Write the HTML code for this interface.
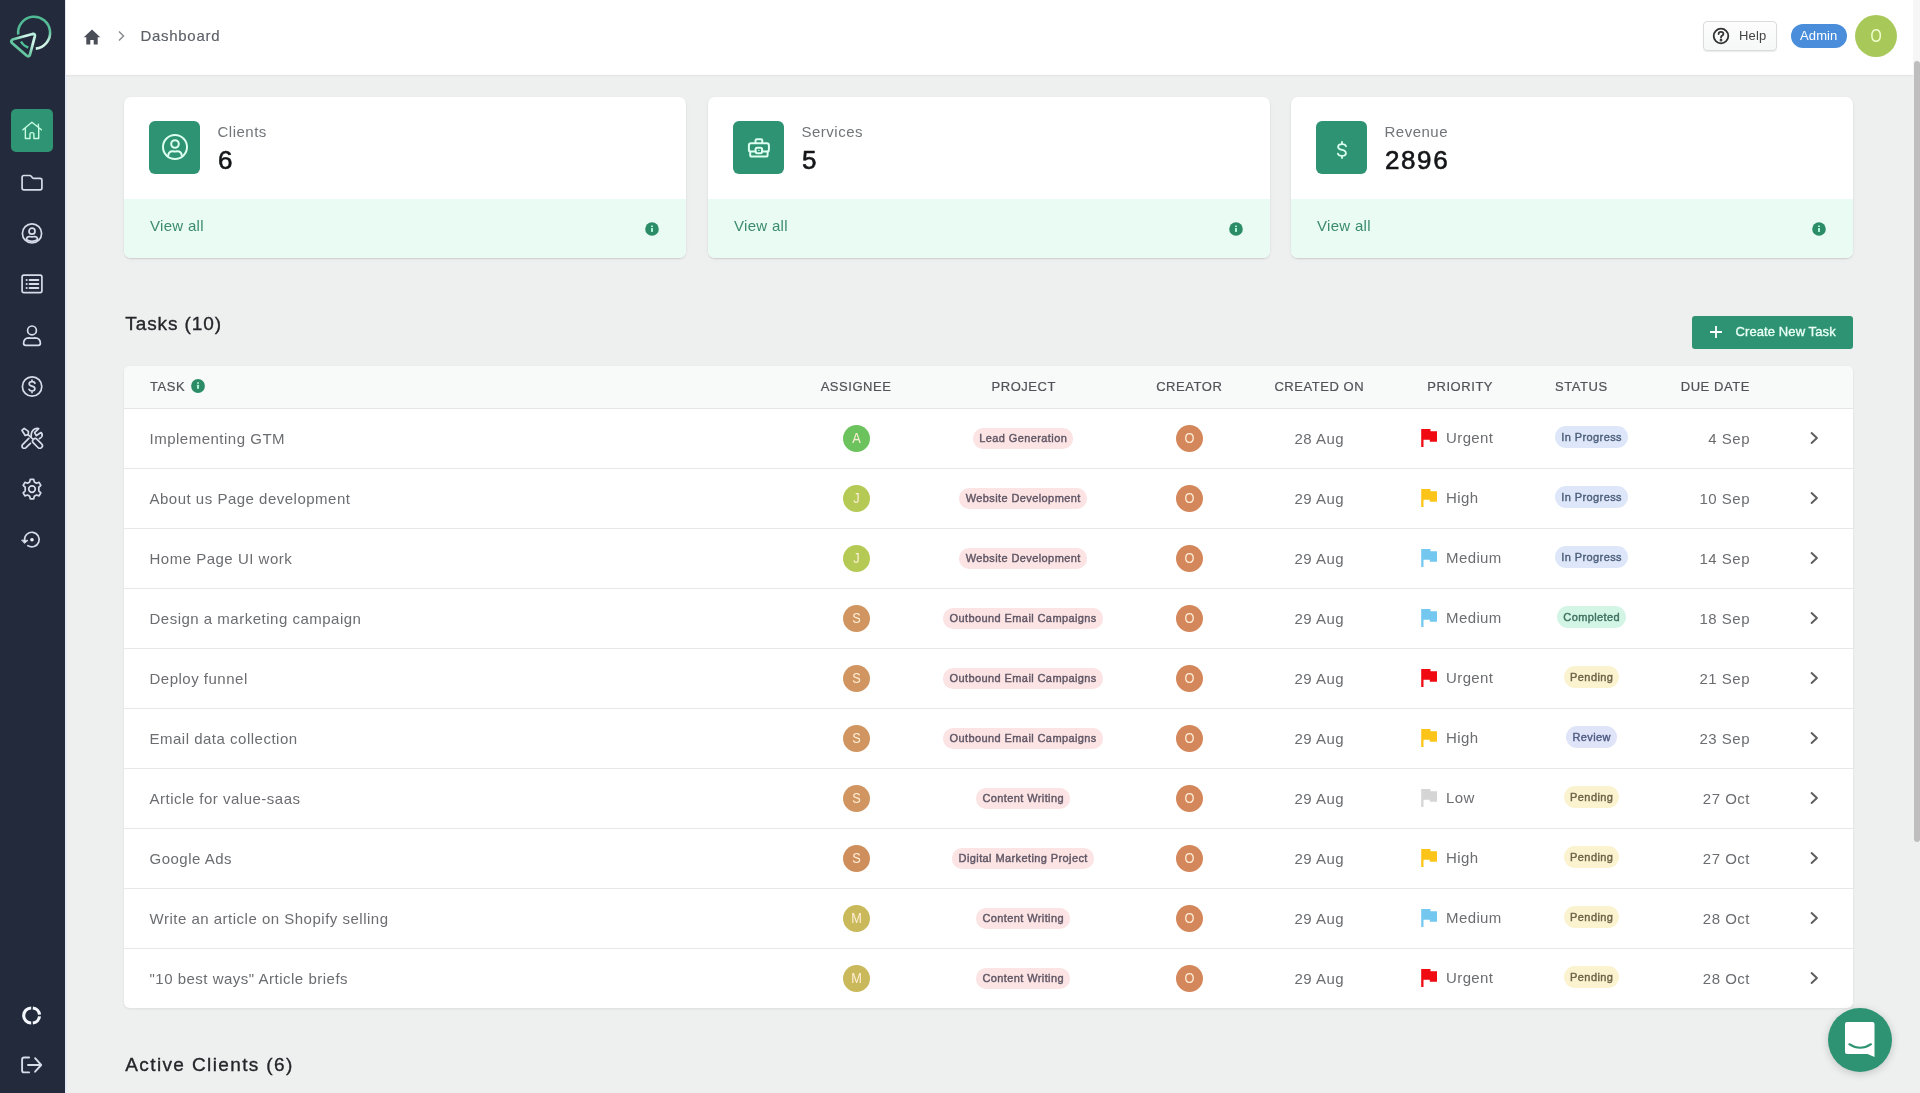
<!DOCTYPE html>
<html><head><meta charset="utf-8"><title>Dashboard</title>
<style>
*{margin:0;padding:0;box-sizing:border-box}
html,body{width:1920px;height:1093px;overflow:hidden}
body{font-family:"Liberation Sans",sans-serif;background:#eeefef;position:relative;color:#333}
.side{position:absolute;left:0;top:0;width:65px;height:1093px;background:#232a3c}
.sideline{position:absolute;left:65px;top:0;width:2px;height:1093px;background:#e6e9f4}
.logo{position:absolute;left:0;top:0}
.act{position:absolute;left:11px;top:109px;width:42px;height:43px;border-radius:5px;background:#2f9473}
.act svg{position:absolute;left:9px;top:9px}
.sic{position:absolute;left:20px;width:24px;height:24px}
.sic svg{display:block}
.header{position:absolute;left:66px;top:0;width:1847px;height:75px;background:#fff;box-shadow:0 1px 2px rgba(0,0,0,0.05);border-bottom:1px solid #fbfbfb}
.crumbhome{position:absolute;left:84px;top:29px}
.crumbchev{position:absolute;left:116px;top:29px}
.crumb{position:absolute;left:140.5px;top:28px;font-size:15px;line-height:15px;color:#5c6168;letter-spacing:0.7px;-webkit-text-stroke:0.15px #5c6168}
.help{position:absolute;left:1703px;top:21px;width:74px;height:30px;border:1px solid #dadbdc;border-radius:4px;background:linear-gradient(#fdfdfd,#f6f7f7);box-shadow:0 1px 1px rgba(0,0,0,0.08)}
.help svg{position:absolute;left:8px;top:5.3px}
.help span{position:absolute;left:35px;top:6.5px;font-size:13px;line-height:13px;color:#444;letter-spacing:0.2px}
.admin{position:absolute;left:1790.5px;top:23.5px;width:56.5px;height:24.5px;border-radius:13px;background:#4a8edb;color:#fff;font-size:13px;line-height:24.5px;text-align:center;letter-spacing:0.1px}
.uav{position:absolute;left:1855px;top:15px;width:42px;height:42px;border-radius:50%;background:#a8c95a}
.uav span{position:absolute;left:0;top:0;width:42px;height:42px;line-height:42px;text-align:center;color:#f0ffd2;font-size:18px;transform:scaleX(0.8)}
.sbtrack{position:absolute;left:1913px;top:0;width:7px;height:75px;background:#f6f6f6}
.sbthumb{position:absolute;left:1913.5px;top:61px;width:6.5px;height:781px;border-radius:3px;background:#bebebf}
.card{position:absolute;top:97px;width:562px;height:160.5px;background:#fff;border-radius:7px;box-shadow:0 1px 1.5px rgba(0,0,0,0.13),0 1px 4px rgba(0,0,0,0.04);overflow:hidden}
.cbox{position:absolute;left:25.3px;top:24px;width:51px;height:52.5px;border-radius:6px;background:#2e9373}
.cbox svg{position:absolute;left:11.5px;top:12px}
.cbox svg.dsvg{position:absolute;left:19.6px;top:19.5px}
.clab{position:absolute;left:93.5px;top:26.8px;font-size:15px;line-height:15px;color:#717478;letter-spacing:0.5px}
.cnum{position:absolute;left:94px;top:49.7px;font-size:26px;line-height:26px;color:#141518;letter-spacing:1.6px;-webkit-text-stroke:0.6px #141518}
.cfoot{position:absolute;left:0;top:101.5px;width:100%;height:59px;background:#e9fbf3}
.vall{position:absolute;left:26px;top:19.5px;font-size:15px;line-height:15px;color:#3b8b6f;letter-spacing:0.3px}
.info{position:absolute;left:521px;top:124.5px;}
.cfoot .info{position:absolute;left:521.1px;top:23.7px}
.title{position:absolute;left:125.3px;font-size:19px;line-height:19px;color:#25262a;letter-spacing:0.9px;-webkit-text-stroke:0.35px #25262a}
.newbtn{position:absolute;left:1692px;top:316px;width:161px;height:33px;border-radius:3px;background:#2e9373;color:#fff}
.newbtn svg{position:absolute;left:17px;top:9px}
.newbtn span{position:absolute;left:43.5px;top:9px;font-size:13px;line-height:13px;letter-spacing:0.1px;color:#eafff6;-webkit-text-stroke:0.35px #eafff6}
.table{position:absolute;left:124px;top:366px;width:1729px;height:642px;background:#fff;border-radius:6px;box-shadow:0 1px 3px rgba(0,0,0,0.08);overflow:hidden}
.thead{position:absolute;left:0;top:0;width:100%;height:43px;background:#f8f9f9;border-bottom:1px solid #e4e6e8}
.th{position:absolute;top:13.5px;font-size:13px;line-height:13px;color:#4f5257;letter-spacing:0.55px;white-space:nowrap;-webkit-text-stroke:0.2px #4f5257}
.th.c{width:120px;text-align:center;text-indent:0.55px}
.th.r{width:120px;text-align:right;margin-right:-0.55px}
.thinfo{position:absolute;left:67px;top:12.6px}
.row{position:absolute;left:0;width:100%;height:60px;border-bottom:1px solid #e6e8ea}
.tname{position:absolute;left:25.5px;top:22px;font-size:15px;line-height:15px;color:#6b6d70;letter-spacing:0.5px;white-space:nowrap}
.av{position:absolute;left:718.5px;top:15.5px;width:27px;height:27px;border-radius:50%}
.av span{position:absolute;left:0;top:0;width:27px;height:27px;color:#ffeed6;font-size:14.5px;line-height:26.5px;text-align:center;transform:scaleX(0.88)}
.av.cr{left:1051.5px;background:#d3875a}
.proj{position:absolute;left:799px;width:200px;top:19px;text-align:center}
.proj span{display:inline-block;height:20.5px;line-height:20.5px;padding:0 6px 0 6.4px;border-radius:10px;background:#fce3e4;color:#5e5664;font-size:11px;letter-spacing:0.4px;-webkit-text-stroke:0.4px #5e5664}
.created{position:absolute;left:1145px;width:100px;top:22px;text-align:center;font-size:15px;line-height:15px;color:#6b6d70;letter-spacing:0.5px;text-indent:0.5px}
.pri{position:absolute;left:1296px;top:18px;height:22px}
.pri .flag{position:absolute;left:0;top:1px}
.pri span{position:absolute;left:26px;top:3px;font-size:15px;line-height:15px;color:#6b6d70;letter-spacing:0.4px}
.stat{position:absolute;left:1417.5px;width:100px;top:17px;text-align:center}
.stat span{display:inline-block;height:22px;line-height:22px;padding:0 6px 0 6.4px;border-radius:11px;font-size:11px;letter-spacing:0.4px;-webkit-text-stroke:0.4px currentColor}
.due{position:absolute;left:1526px;width:100px;top:22px;text-align:right;font-size:15px;line-height:15px;color:#6b6d70;letter-spacing:0.5px;margin-right:-0.5px}
.chev{position:absolute;left:1685px;top:22px}
.chat{position:absolute;left:1828px;top:1008px;width:64px;height:64px;border-radius:50%;background:#2e9373;box-shadow:0 2px 8px rgba(0,0,0,0.18)}
.chat svg{position:absolute;left:17px;top:14px}
#wrap{position:absolute;left:0;top:0;width:1920px;height:1093px;will-change:transform;overflow:hidden}
</style></head><body><div id="wrap">
<div class="side">
<svg class="logo" width="65" height="65" viewBox="0 0 65 65">
<defs><linearGradient id="lg" x1="0" y1="1" x2="1" y2="0"><stop offset="0" stop-color="#4cb891"/><stop offset="0.45" stop-color="#6dcaa6"/><stop offset="0.75" stop-color="#d2f6ea"/><stop offset="1" stop-color="#b5eeda"/></linearGradient><linearGradient id="lg2" x1="0" y1="0" x2="0.3" y2="1"><stop offset="0" stop-color="#4cb891"/><stop offset="0.7" stop-color="#5cc09b"/><stop offset="1" stop-color="#d0f4e6"/></linearGradient></defs>
<path d="M18.2 34.5 A16 16 0 1 1 35.8 48.6" fill="none" stroke="url(#lg2)" stroke-width="2.6" stroke-linecap="butt"/>
<path d="M12.5 39.5 L32.5 34 Q35.5 33.5 34.8 36.5 L30 54.5 Q29 57.5 26.5 55.5 L12 43 Q10.5 41 12.5 39.5 Z" fill="none" stroke="url(#lg)" stroke-width="2.8" stroke-linejoin="round"/>
<path d="M21 41.5 Q23.5 46 28.3 47.5" fill="none" stroke="#4fc196" stroke-width="2.4"/>
</svg>
<div class="act"><svg width="24" height="24" viewBox="0 0 24 24" fill="none" stroke="#c6fde3" stroke-width="1.4" stroke-linecap="round" stroke-linejoin="round"><path d="M2.9 11.7 L11.9 4.3 L21.4 11.7 M5.35 9.6 V20.5 H10 V15.8 Q10 14.6 11.95 14.6 Q13.9 14.6 13.9 15.8 V20.5 H18.7 V9.6 M18.4 6.3 V9"/></svg></div>
<div class="sic" style="top:170px"><svg width="24" height="24" viewBox="0 0 24 24" fill="none" stroke="#d6dce8" stroke-width="1.7" stroke-linecap="round" stroke-linejoin="round" stroke-width="1.9"><path d="M2.1 7.3 V18.1 Q2.1 19.9 3.9 19.9 H20.1 Q21.9 19.9 21.9 18.1 V10.2 Q21.9 8.4 20.1 8.4 H14 Q13 8.4 12.3 7.6 L11.4 6.4 Q10.7 5.5 9.6 5.5 H3.9 Q2.1 5.5 2.1 7.3 Z"/></svg></div>
<div class="sic" style="top:221px"><svg width="24" height="24" viewBox="0 0 24 24" fill="none" stroke="#d6dce8" stroke-width="1.7" stroke-linecap="round" stroke-linejoin="round"><circle cx="12" cy="12.4" r="9.6"/><circle cx="12" cy="10.2" r="3"/><path d="M6.3 18.8 Q6.6 15.6 9.4 15.5 Q12 16.2 14.6 15.5 Q17.4 15.6 17.7 18.8"/><path d="M7 19 Q9 20.3 12 20.3 Q15 20.3 17 19"/></svg></div>
<div class="sic" style="top:272px"><svg width="24" height="24" viewBox="0 0 24 24" fill="none" stroke="#d6dce8" stroke-width="1.7" stroke-linecap="round" stroke-linejoin="round" stroke-width="1.9"><rect x="2.1" y="3.2" width="19.8" height="17.4" rx="1.8"/><path d="M6.6 8 H6.7 M9.6 8 H18.3 M6.6 12 H6.7 M9.6 12 H18.3 M6.6 16 H6.7 M9.6 16 H18.3" stroke-width="2"/></svg></div>
<div class="sic" style="top:323px"><svg width="24" height="24" viewBox="0 0 24 24" fill="none" stroke="#d6dce8" stroke-width="1.7" stroke-linecap="round" stroke-linejoin="round"><circle cx="12" cy="7.4" r="4.4"/><path d="M3.6 20.3 Q3.6 15 9 14.8 Q12 15.5 15 14.8 Q20.4 15 20.4 20.3 Q20.4 22.3 18.4 22.3 H5.6 Q3.6 22.3 3.6 20.3 Z"/></svg></div>
<div class="sic" style="top:374px"><svg width="24" height="24" viewBox="0 0 24 24" fill="none" stroke="#d6dce8" stroke-width="1.7" stroke-linecap="round" stroke-linejoin="round"><circle cx="12.1" cy="12.5" r="9.7"/><path d="M14.9 9.3 Q14.5 7.6 12 7.6 Q9.2 7.6 9.2 9.7 Q9.2 11.5 12 12.1 Q14.9 12.7 14.9 14.8 Q14.9 17 12 17 Q9.5 17 9 15.3 M12 6 V7.6 M12 17 V18.6"/></svg></div>
<div class="sic" style="top:425px"><svg width="24" height="24" viewBox="0 0 24 24" fill="none" stroke="#d6dce8" stroke-width="1.7" stroke-linecap="round" stroke-linejoin="round" stroke-width="1.6"><path d="M1.9 5.3 L4.2 3.4 L8.4 6.4 L8.2 9.6 L5.2 10.5 Z"/><path d="M8.3 9.8 L12.4 13.6"/><rect x="-2.6" y="-5.8" width="5.2" height="11.6" rx="2.6" transform="translate(17.5 18.4) rotate(-45)"/><path d="M8.8 13.3 L2.6 19.6 Q1.3 21.3 2.8 22.8 Q4.3 24.1 6 22.7 L10.4 18.4"/><path d="M11.2 11.4 Q10.9 6.2 14.5 4 Q16.6 2.9 18.7 3.6 L14.6 7.7 L16.2 10.7 L20.9 7.5 Q22.9 9.2 21.8 11.6 Q21 12.9 19.4 13.6"/></svg></div>
<div class="sic" style="top:476px"><svg width="24" height="24" viewBox="0 0 24 24" fill="none" stroke="#d6dce8" stroke-width="1.7" stroke-linecap="round" stroke-linejoin="round"><circle cx="12" cy="13.1" r="3.3"/><path d="M10.3 3.3 H13.7 L14.3 5.9 L16.5 7.2 L19.1 6.3 L20.8 9.4 L18.8 11.3 V14.9 L20.8 16.8 L19.1 19.9 L16.5 19 L14.3 20.3 L13.7 22.9 H10.3 L9.7 20.3 L7.5 19 L4.9 19.9 L3.2 16.8 L5.2 14.9 V11.3 L3.2 9.4 L4.9 6.3 L7.5 7.2 L9.7 5.9 Z"/></svg></div>
<div class="sic" style="top:527px"><svg width="24" height="24" viewBox="0 0 24 24" fill="none" stroke="#d6dce8" stroke-width="1.7" stroke-linecap="round" stroke-linejoin="round" stroke="#e6ebf4" stroke-width="2"><path d="M4.6 13.2 A7.3 7.3 0 1 1 7.8 18.6"/><path d="M1.9 13.1 L8 13.4 L4.7 16.2 Z" fill="#e6ebf4" stroke-width="0.8"/><circle cx="12" cy="12.7" r="1.8" fill="#eef2f8" stroke="none"/></svg></div>
<div class="sic" style="top:1003px"><svg width="24" height="24" viewBox="0 0 24 24" fill="none" stroke="#f4f7fc" stroke-width="3.1"><path d="M11.2 5 A7.5 7.5 0 0 0 11.2 20 M12.8 20 A7.5 7.5 0 0 0 19.5 13.3 M19.5 11.7 A7.5 7.5 0 0 0 12.8 5"/></svg></div>
<div class="sic" style="top:1052px"><svg width="24" height="24" viewBox="0 0 24 24" fill="none" stroke="#d6dce8" stroke-width="1.9" stroke-linecap="round" stroke-linejoin="round"><path d="M9.1 5.5 H4.1 Q2.1 5.5 2.1 7.5 V18.4 Q2.1 20.4 4.1 20.4 H9.1 M8 13 H20.8 M15.1 6.2 L21.2 13 L15.1 19.7"/></svg></div>
</div>
<div class="sideline"></div>
<div class="header">
</div>
<svg class="crumbhome" width="16" height="16" viewBox="0 0 16 16" overflow="visible"><path d="M8 0.6 L-0.2 8.2 H2.3 V15.5 H6.3 V11 H9.7 V15.5 H13.7 V8.2 H16.2 Z" fill="#4a4f57"/></svg>
<svg class="crumbchev" width="10" height="14" viewBox="0 0 10 14"><path d="M3 2.5 L7.5 7 L3 11.5" fill="none" stroke="#8a8d92" stroke-width="1.5"/></svg>
<div class="crumb">Dashboard</div>
<div class="help"><svg width="18" height="18" viewBox="0 0 18 18" fill="none" stroke="#333" stroke-width="1.8" stroke-linecap="round"><circle cx="9" cy="9" r="7.3"/><path d="M6.6 7 Q6.6 4.8 9 4.8 Q11.4 4.8 11.4 6.8 Q11.4 8.2 9.8 8.9 Q9 9.3 9 10.6"/><circle cx="9" cy="13.2" r="0.5" fill="#333"/></svg><span>Help</span></div>
<div class="admin">Admin</div>
<div class="uav"><span>O</span></div>
<div class="sbtrack"></div>
<div class="sbthumb"></div>
<div class="card" style="left:124px">
<div class="cbox"><svg width="28" height="28" viewBox="0 0 28 28" fill="none" stroke="#dcfff0" stroke-width="2" stroke-linecap="round"><circle cx="14" cy="14" r="12"/><circle cx="14" cy="11" r="3.8"/><path d="M7.3 22 Q8 18 12 18.3 Q14 18.8 16 18.3 Q20 18 20.7 22"/></svg></div>
<div class="clab">Clients</div>
<div class="cnum">6</div>
<div class="cfoot"><div class="vall">View all</div><svg class="info" width="14" height="14" viewBox="0 0 14 14"><circle cx="7" cy="7" r="6.8" fill="#2c8c68"/><rect x="6" y="3.4" width="2" height="1.6" rx="0.5" fill="#b0f5dc"/><rect x="6" y="5.9" width="2" height="4" rx="0.4" fill="#b0f5dc"/></svg></div>
</div><div class="card" style="left:708px">
<div class="cbox"><svg width="28" height="28" viewBox="0 0 28 28" fill="none" stroke="#dcfff0" stroke-width="2" stroke-linecap="round" stroke-linejoin="round"><path d="M10.5 10 V7.6 Q10.5 6.2 11.9 6.2 H15.9 Q17.3 6.2 17.3 7.6 V10"/><path d="M6 10.3 H21.8 Q23.9 10.3 23.9 12.4 V16.8 Q23.9 18.4 22.6 18.7 V21.9 Q22.6 23.6 20.9 23.6 H6.9 Q5.2 23.6 5.2 21.9 V18.7 Q3.9 18.4 3.9 16.8 V12.4 Q3.9 10.3 6 10.3 Z"/><path d="M4.6 18.4 H10.5 M17.2 18.4 H23.2"/><rect x="10.6" y="14.7" width="6.5" height="5.5" rx="1.6"/><circle cx="13.85" cy="17.4" r="0.7" fill="#dcfff0" stroke="none"/></svg></div>
<div class="clab">Services</div>
<div class="cnum">5</div>
<div class="cfoot"><div class="vall">View all</div><svg class="info" width="14" height="14" viewBox="0 0 14 14"><circle cx="7" cy="7" r="6.8" fill="#2c8c68"/><rect x="6" y="3.4" width="2" height="1.6" rx="0.5" fill="#b0f5dc"/><rect x="6" y="5.9" width="2" height="4" rx="0.4" fill="#b0f5dc"/></svg></div>
</div><div class="card" style="left:1291px">
<div class="cbox"><svg class="dsvg" width="12" height="18" viewBox="0 0 12 18" fill="none" stroke="#dcfff0" stroke-width="1.8" stroke-linecap="round"><path d="M10 5.3 Q9.5 3.1 6 3.1 Q2.1 3.1 2.1 5.8 Q2.1 8.2 6 8.9 Q9.9 9.6 9.9 12.2 Q9.9 14.9 6 14.9 Q2.4 14.9 1.9 12.6 M6 0.9 V3.1 M6 14.9 V17.1"/></svg></div>
<div class="clab">Revenue</div>
<div class="cnum">2896</div>
<div class="cfoot"><div class="vall">View all</div><svg class="info" width="14" height="14" viewBox="0 0 14 14"><circle cx="7" cy="7" r="6.8" fill="#2c8c68"/><rect x="6" y="3.4" width="2" height="1.6" rx="0.5" fill="#b0f5dc"/><rect x="6" y="5.9" width="2" height="4" rx="0.4" fill="#b0f5dc"/></svg></div>
</div>
<div class="title" style="top:314.4px">Tasks (10)</div>
<div class="newbtn"><svg width="14" height="14" viewBox="0 0 14 14"><path d="M7 1 V13 M1 7 H13" stroke="#fff" stroke-width="1.8"/></svg><span>Create New Task</span></div>
<div class="table">
<div class="thead">
<div class="th" style="left:26px">TASK</div><svg class="thinfo" width="14" height="14" viewBox="0 0 14 14"><circle cx="7" cy="7" r="6.9" fill="#2c8c68"/><rect x="6" y="3.2" width="2" height="1.6" rx="0.5" fill="#b0f5dc"/><rect x="6" y="5.8" width="2" height="4" rx="0.4" fill="#b0f5dc"/></svg>
<div class="th c" style="left:671.8px">ASSIGNEE</div>
<div class="th c" style="left:839.5px">PROJECT</div>
<div class="th c" style="left:1005px">CREATOR</div>
<div class="th c" style="left:1135px">CREATED ON</div>
<div class="th" style="left:1303.3px">PRIORITY</div>
<div class="th" style="left:1431px">STATUS</div>
<div class="th r" style="left:1505.9px">DUE DATE</div>
</div>
<div class="row" style="top:43px">
<div class="tname">Implementing GTM</div>
<div class="av" style="background:#6cc35d"><span>A</span></div>
<div class="proj"><span>Lead Generation</span></div>
<div class="av cr"><span>O</span></div>
<div class="created">28 Aug</div>
<div class="pri"><svg class="flag" width="18" height="20" viewBox="0 0 18 20"><path d="M1.2 0.9 H10.5 V3.2 H17 V13.7 H9.8 V11.8 H3.5 V19 H1.2 Z" fill="#f00a12"/></svg><span>Urgent</span></div>
<div class="stat"><span style="background:#dde7f9;color:#4d5e7a">In Progress</span></div>
<div class="due">4 Sep</div>
<svg class="chev" width="10" height="14" viewBox="0 0 10 14"><path d="M2.6 2.1 L7.9 7 L2.6 11.9" fill="none" stroke="#5e5e60" stroke-width="2" stroke-linecap="round" stroke-linejoin="round"/></svg>
</div><div class="row" style="top:103px">
<div class="tname">About us Page development</div>
<div class="av" style="background:#b4ca55"><span>J</span></div>
<div class="proj"><span>Website Development</span></div>
<div class="av cr"><span>O</span></div>
<div class="created">29 Aug</div>
<div class="pri"><svg class="flag" width="18" height="20" viewBox="0 0 18 20"><path d="M1.2 0.9 H10.5 V3.2 H17 V13.7 H9.8 V11.8 H3.5 V19 H1.2 Z" fill="#fcc419"/></svg><span>High</span></div>
<div class="stat"><span style="background:#dde7f9;color:#4d5e7a">In Progress</span></div>
<div class="due">10 Sep</div>
<svg class="chev" width="10" height="14" viewBox="0 0 10 14"><path d="M2.6 2.1 L7.9 7 L2.6 11.9" fill="none" stroke="#5e5e60" stroke-width="2" stroke-linecap="round" stroke-linejoin="round"/></svg>
</div><div class="row" style="top:163px">
<div class="tname">Home Page UI work</div>
<div class="av" style="background:#b4ca55"><span>J</span></div>
<div class="proj"><span>Website Development</span></div>
<div class="av cr"><span>O</span></div>
<div class="created">29 Aug</div>
<div class="pri"><svg class="flag" width="18" height="20" viewBox="0 0 18 20"><path d="M1.2 0.9 H10.5 V3.2 H17 V13.7 H9.8 V11.8 H3.5 V19 H1.2 Z" fill="#74c8f0"/></svg><span>Medium</span></div>
<div class="stat"><span style="background:#dde7f9;color:#4d5e7a">In Progress</span></div>
<div class="due">14 Sep</div>
<svg class="chev" width="10" height="14" viewBox="0 0 10 14"><path d="M2.6 2.1 L7.9 7 L2.6 11.9" fill="none" stroke="#5e5e60" stroke-width="2" stroke-linecap="round" stroke-linejoin="round"/></svg>
</div><div class="row" style="top:223px">
<div class="tname">Design a marketing campaign</div>
<div class="av" style="background:#d09560"><span>S</span></div>
<div class="proj"><span>Outbound Email Campaigns</span></div>
<div class="av cr"><span>O</span></div>
<div class="created">29 Aug</div>
<div class="pri"><svg class="flag" width="18" height="20" viewBox="0 0 18 20"><path d="M1.2 0.9 H10.5 V3.2 H17 V13.7 H9.8 V11.8 H3.5 V19 H1.2 Z" fill="#74c8f0"/></svg><span>Medium</span></div>
<div class="stat"><span style="background:#d3f5e6;color:#3e6f5e">Completed</span></div>
<div class="due">18 Sep</div>
<svg class="chev" width="10" height="14" viewBox="0 0 10 14"><path d="M2.6 2.1 L7.9 7 L2.6 11.9" fill="none" stroke="#5e5e60" stroke-width="2" stroke-linecap="round" stroke-linejoin="round"/></svg>
</div><div class="row" style="top:283px">
<div class="tname">Deploy funnel</div>
<div class="av" style="background:#d09560"><span>S</span></div>
<div class="proj"><span>Outbound Email Campaigns</span></div>
<div class="av cr"><span>O</span></div>
<div class="created">29 Aug</div>
<div class="pri"><svg class="flag" width="18" height="20" viewBox="0 0 18 20"><path d="M1.2 0.9 H10.5 V3.2 H17 V13.7 H9.8 V11.8 H3.5 V19 H1.2 Z" fill="#f00a12"/></svg><span>Urgent</span></div>
<div class="stat"><span style="background:#fbf3cf;color:#6b6247">Pending</span></div>
<div class="due">21 Sep</div>
<svg class="chev" width="10" height="14" viewBox="0 0 10 14"><path d="M2.6 2.1 L7.9 7 L2.6 11.9" fill="none" stroke="#5e5e60" stroke-width="2" stroke-linecap="round" stroke-linejoin="round"/></svg>
</div><div class="row" style="top:343px">
<div class="tname">Email data collection</div>
<div class="av" style="background:#d09560"><span>S</span></div>
<div class="proj"><span>Outbound Email Campaigns</span></div>
<div class="av cr"><span>O</span></div>
<div class="created">29 Aug</div>
<div class="pri"><svg class="flag" width="18" height="20" viewBox="0 0 18 20"><path d="M1.2 0.9 H10.5 V3.2 H17 V13.7 H9.8 V11.8 H3.5 V19 H1.2 Z" fill="#fcc419"/></svg><span>High</span></div>
<div class="stat"><span style="background:#dfe4f8;color:#4d5a82">Review</span></div>
<div class="due">23 Sep</div>
<svg class="chev" width="10" height="14" viewBox="0 0 10 14"><path d="M2.6 2.1 L7.9 7 L2.6 11.9" fill="none" stroke="#5e5e60" stroke-width="2" stroke-linecap="round" stroke-linejoin="round"/></svg>
</div><div class="row" style="top:403px">
<div class="tname">Article for value-saas</div>
<div class="av" style="background:#d09560"><span>S</span></div>
<div class="proj"><span>Content Writing</span></div>
<div class="av cr"><span>O</span></div>
<div class="created">29 Aug</div>
<div class="pri"><svg class="flag" width="18" height="20" viewBox="0 0 18 20"><path d="M1.2 0.9 H10.5 V3.2 H17 V13.7 H9.8 V11.8 H3.5 V19 H1.2 Z" fill="#d5d5d5"/></svg><span>Low</span></div>
<div class="stat"><span style="background:#fbf3cf;color:#6b6247">Pending</span></div>
<div class="due">27 Oct</div>
<svg class="chev" width="10" height="14" viewBox="0 0 10 14"><path d="M2.6 2.1 L7.9 7 L2.6 11.9" fill="none" stroke="#5e5e60" stroke-width="2" stroke-linecap="round" stroke-linejoin="round"/></svg>
</div><div class="row" style="top:463px">
<div class="tname">Google Ads</div>
<div class="av" style="background:#cf8f5d"><span>S</span></div>
<div class="proj"><span>Digital Marketing Project</span></div>
<div class="av cr"><span>O</span></div>
<div class="created">29 Aug</div>
<div class="pri"><svg class="flag" width="18" height="20" viewBox="0 0 18 20"><path d="M1.2 0.9 H10.5 V3.2 H17 V13.7 H9.8 V11.8 H3.5 V19 H1.2 Z" fill="#fcc419"/></svg><span>High</span></div>
<div class="stat"><span style="background:#fbf3cf;color:#6b6247">Pending</span></div>
<div class="due">27 Oct</div>
<svg class="chev" width="10" height="14" viewBox="0 0 10 14"><path d="M2.6 2.1 L7.9 7 L2.6 11.9" fill="none" stroke="#5e5e60" stroke-width="2" stroke-linecap="round" stroke-linejoin="round"/></svg>
</div><div class="row" style="top:523px">
<div class="tname">Write an article on Shopify selling</div>
<div class="av" style="background:#c9b95b"><span>M</span></div>
<div class="proj"><span>Content Writing</span></div>
<div class="av cr"><span>O</span></div>
<div class="created">29 Aug</div>
<div class="pri"><svg class="flag" width="18" height="20" viewBox="0 0 18 20"><path d="M1.2 0.9 H10.5 V3.2 H17 V13.7 H9.8 V11.8 H3.5 V19 H1.2 Z" fill="#74c8f0"/></svg><span>Medium</span></div>
<div class="stat"><span style="background:#fbf3cf;color:#6b6247">Pending</span></div>
<div class="due">28 Oct</div>
<svg class="chev" width="10" height="14" viewBox="0 0 10 14"><path d="M2.6 2.1 L7.9 7 L2.6 11.9" fill="none" stroke="#5e5e60" stroke-width="2" stroke-linecap="round" stroke-linejoin="round"/></svg>
</div><div class="row" style="top:583px">
<div class="tname">&quot;10 best ways&quot; Article briefs</div>
<div class="av" style="background:#c9b95b"><span>M</span></div>
<div class="proj"><span>Content Writing</span></div>
<div class="av cr"><span>O</span></div>
<div class="created">29 Aug</div>
<div class="pri"><svg class="flag" width="18" height="20" viewBox="0 0 18 20"><path d="M1.2 0.9 H10.5 V3.2 H17 V13.7 H9.8 V11.8 H3.5 V19 H1.2 Z" fill="#f00a12"/></svg><span>Urgent</span></div>
<div class="stat"><span style="background:#fbf3cf;color:#6b6247">Pending</span></div>
<div class="due">28 Oct</div>
<svg class="chev" width="10" height="14" viewBox="0 0 10 14"><path d="M2.6 2.1 L7.9 7 L2.6 11.9" fill="none" stroke="#5e5e60" stroke-width="2" stroke-linecap="round" stroke-linejoin="round"/></svg>
</div>
</div>
<div class="title" style="top:1055.4px;letter-spacing:1.38px">Active Clients (6)</div>
<div class="chat"><svg width="30" height="36" viewBox="0 0 30 36"><path d="M2 0 H27.5 Q29.5 0 29.5 2 V35 L22.5 31.9 H2 Q0 31.9 0 29.9 V2 Q0 0 2 0 Z" fill="#fff"/><path d="M4.3 22.2 Q15.2 29.5 26 22.2" fill="none" stroke="#2e9373" stroke-width="2" stroke-linecap="round"/></svg></div>
</div></body></html>
